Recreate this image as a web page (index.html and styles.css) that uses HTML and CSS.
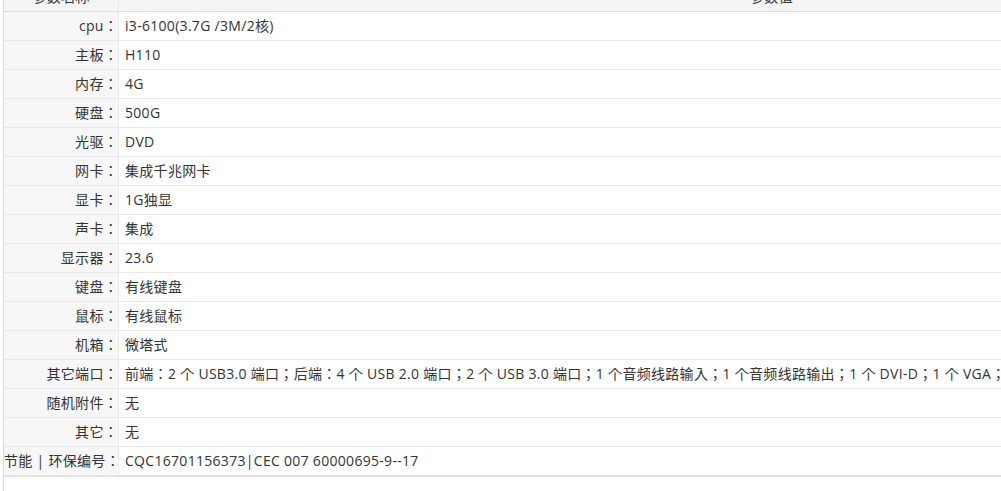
FILE: index.html
```html
<!DOCTYPE html>
<html>
<head>
<meta charset="utf-8">
<link rel="stylesheet" href="styles.css">
</head>
<body>
<div class="wrap">
<table class="params">
<thead>
<tr><th class="k">参数名称</th><th class="v">参数值</th></tr>
</thead>
<tbody>
<tr><td class="k">cpu：</td><td class="v">i3-6100(3.7G /3M/2核)</td></tr>
<tr><td class="k">主板：</td><td class="v">H110</td></tr>
<tr><td class="k">内存：</td><td class="v">4G</td></tr>
<tr><td class="k">硬盘：</td><td class="v">500G</td></tr>
<tr><td class="k">光驱：</td><td class="v">DVD</td></tr>
<tr><td class="k">网卡：</td><td class="v">集成千兆网卡</td></tr>
<tr><td class="k">显卡：</td><td class="v">1G独显</td></tr>
<tr><td class="k">声卡：</td><td class="v">集成</td></tr>
<tr><td class="k">显示器：</td><td class="v">23.6</td></tr>
<tr><td class="k">键盘：</td><td class="v">有线键盘</td></tr>
<tr><td class="k">鼠标：</td><td class="v">有线鼠标</td></tr>
<tr><td class="k">机箱：</td><td class="v">微塔式</td></tr>
<tr><td class="k">其它端口：</td><td class="v">前端：2 个 USB3.0 端口；后端：4 个 USB 2.0 端口；2 个 USB 3.0 端口；1 个音频线路输入；1 个音频线路输出；1 个 DVI-D；1 个 VGA；1 个 RJ-45；1 个 PS/2 键盘端口；1 个 PS/2 鼠标端口</td></tr>
<tr><td class="k">随机附件：</td><td class="v">无</td></tr>
<tr><td class="k">其它：</td><td class="v">无</td></tr>
<tr><td class="k">节能 | 环保编号：</td><td class="v">CQC16701156373|CEC 007 60000695-9--17</td></tr>
</tbody>
</table>
</div>
</body>
</html>
```

FILE: styles.css
```css
html, body {
  margin: 0;
  padding: 0;
  background: #fff;
  overflow: hidden;
}
body {
  font-family: "Open Sans", "Noto Sans CJK JP", sans-serif;
  font-size: 14px;
  letter-spacing: 0.3px;
  color: #333;
}
.wrap {
  margin: -17px 0 0 3px;
  width: 1421px;
  height: 520px;
  border-left: 1px solid #d9d9d9;
}
.params {
  width: 1420px;
  border-collapse: collapse;
  table-layout: fixed;
  border-bottom: 2px solid #e3e3e3;
}
.params th, .params td {
  height: 28px;
  padding: 0;
  border-bottom: 1px solid #e8e8e8;
  white-space: nowrap;
  overflow: hidden;
  line-height: 28px;
}
.params th {
  background: #f4f4f4;
  font-weight: normal;
  text-align: center;
  border-bottom: 1px solid #dcdcdc;
}
.params th.k, .params td.k {
  width: 114px;
  border-right: 1px solid #e8e8e8;
}
.params td.k {
  background: #f7f7f7;
  text-align: right;
}
.params td.v {
  padding-left: 6px;
  text-align: left;
}
```
